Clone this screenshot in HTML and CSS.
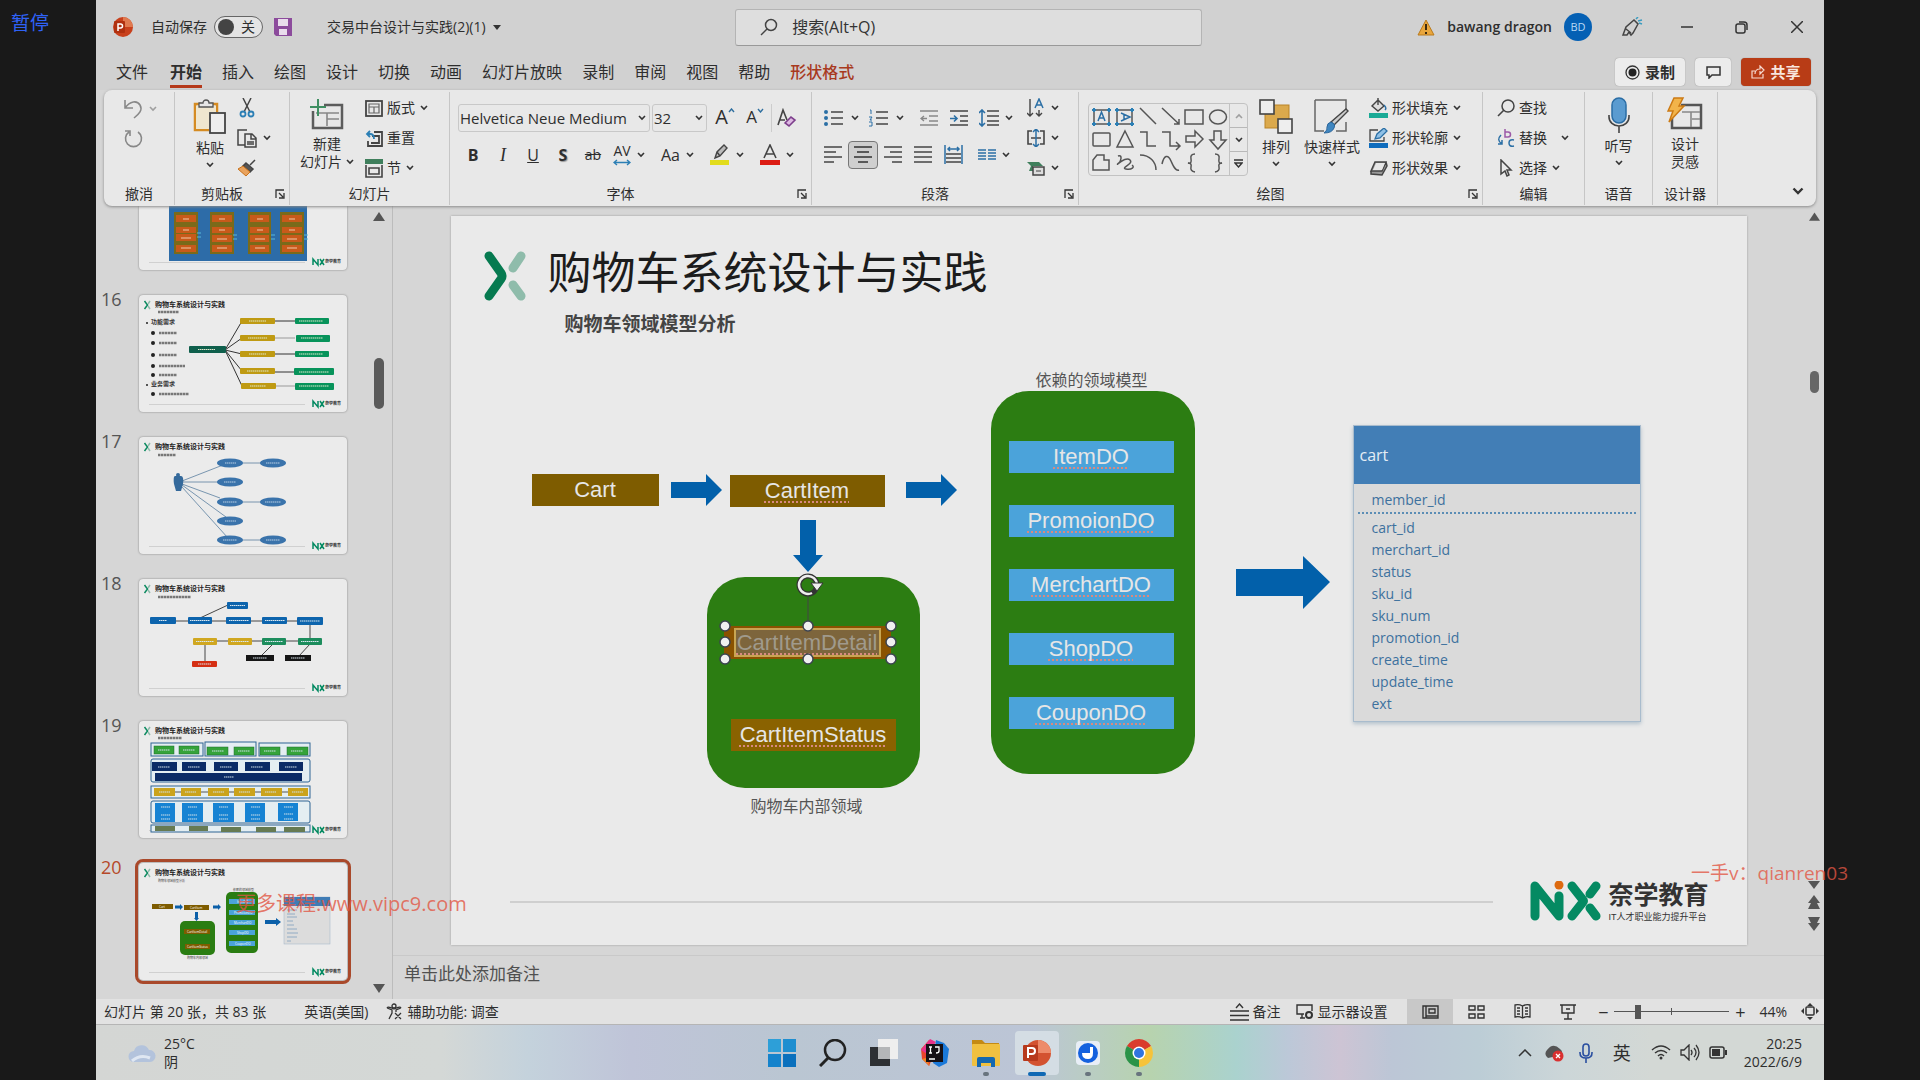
FILE: index.html
```html
<!DOCTYPE html>
<html lang="zh-CN">
<head>
    <meta charset="utf-8"/>
    <title>交易中台设计与实践(2)(1)</title>
    <link rel="stylesheet" href="styles.css">
</head>
<body>
<!-- 公用图形 -->
<svg class="defs" width="0" height="0">
    <symbol id="chev" viewBox="0 0 8 6"><path d="M1 1l3 3 3-3" fill="none" stroke="#333" stroke-width="1.6"/></symbol>
    <symbol id="launch" viewBox="0 0 10 10"><path d="M1 9V1h8M4 4l4 4M9 4v5H4" fill="none" stroke="#333" stroke-width="1.3"/></symbol>
    <symbol id="xmark" viewBox="0 0 42 50">
        <path d="M37 5L29 17M29 34l8 11" fill="none" stroke="#8fbcab" stroke-width="9" stroke-linecap="round"/>
        <path d="M5 5l12 17q2 3 0 6L5 45" fill="none" stroke="#067a50" stroke-width="9" stroke-linecap="round" stroke-linejoin="round"/>
    </symbol>
    <symbol id="nix" viewBox="0 0 71 40">
        <g fill="none" stroke="#048a62" stroke-width="9" stroke-linecap="round" stroke-linejoin="round">
            <path d="M5 35V5l24 30V15"/>
            <path d="M42 5l11 14q1 1 0 2L42 35M66 5l-6 8M60 27l6 8"/>
        </g>
        <circle cx="29" cy="4" r="4.500" fill="#dd6a10"/>
    </symbol>
    <symbol id="thumbBase" viewBox="0 0 208 117">
        <path d="M5.500 6l3 4-3 4" fill="none" stroke="#0c8a60" stroke-width="1.500"/>
        <path d="M11 6l-2 3M9 11l2 3" stroke="#8fbcab" stroke-width="1.500"/>
        <text x="16" y="12" font-size="7" font-weight="bold" fill="#222">购物车系统设计与实践</text>
        <path d="M10 109.500h156" stroke="#c4c4c4" stroke-width=".7"/>
        <path d="M174 112v-6l5 6v-6M181 106l2 3-2 3M185 106l-2 3 2 3" fill="none" stroke="#048a62" stroke-width="1.500"/>
        <text x="186" y="110" font-size="4" font-weight="bold" fill="#333">奈学教育</text>
    </symbol>
</svg>

<div class="window">
    <header class="titlebar">
        <div class="title-left">
            <svg width="20" height="20" viewBox="0 0 20 20"><circle cx="10" cy="10" r="10" fill="#c8401c"/><path d="M10 0a10 10 0 0 1 10 10h-10z" fill="#e07a50"/><rect x="1" y="4" width="11" height="12" rx="1" fill="#b0300f"/><path d="M5 14V7h2.500a2 2 0 0 1 0 4H5" fill="none" stroke="#fff" stroke-width="1.500"/></svg>
            <label class="autosave">自动保存 <input type="checkbox" class="switch-input"><span class="switch"><i></i>关</span></label>
            <button class="save" aria-label="保存"><svg width="20" height="20" viewBox="0 0 20 20"><path d="M1 1h18v18H3l-2-2z" fill="#8c4b9c"/><rect x="5" y="2" width="10" height="7" fill="#e9dcec"/><rect x="6" y="12" width="8" height="6" fill="#e9dcec"/></svg></button>
            <button class="doc-name">交易中台设计与实践(2)(1) <svg width="8" height="5" viewBox="0 0 8 5"><path d="M0 0h8L4 5z" fill="#333"/></svg></button>
        </div>
        <label class="search">
            <svg width="18" height="18" viewBox="0 0 18 18"><circle cx="11" cy="7" r="5.500" fill="none" stroke="#444" stroke-width="1.500"/><path d="M7 11l-6 6" stroke="#444" stroke-width="1.500"/></svg>
            <input type="text" placeholder="搜索(Alt+Q)" aria-label="搜索">
        </label>
        <div class="title-right">
            <svg width="18" height="17" viewBox="0 0 18 17"><path d="M9 1l8 15H1z" fill="#e9a63c" stroke="#b97a1c"/><path d="M9 5v6M9 13v2" stroke="#3b2a10" stroke-width="2"/></svg>
            <span class="user">bawang dragon</span>
            <span class="avatar">BD</span>
            <div class="win-btns">
                <button aria-label="画笔"><svg width="22" height="20" viewBox="0 0 22 20"><path d="M2 18l3-8L13 3l4 4-5 9-2 2-2-3-2 3zM5 12l5 4" fill="none" stroke="#444" stroke-width="1.500"/><path d="M15 2l2-2M17 4l4-1M18 6l3 1" stroke="#3a9cc0" stroke-width="1.500"/></svg></button>
                <button aria-label="最小化"><svg width="12" height="12" viewBox="0 0 12 12"><path d="M0 6h12" stroke="#333" stroke-width="1.500"/></svg></button>
                <button aria-label="还原"><svg width="13" height="13" viewBox="0 0 13 13"><rect x="1" y="3" width="9" height="9" rx="2" fill="none" stroke="#333" stroke-width="1.500"/><path d="M4 1h5q3 0 3 3v5" fill="none" stroke="#333" stroke-width="1.500"/></svg></button>
                <button aria-label="关闭"><svg width="12" height="12" viewBox="0 0 12 12"><path d="M0 0l12 12M12 0L0 12" stroke="#333" stroke-width="1.500"/></svg></button>
            </div>
        </div>
    </header>

    <nav class="tabs">
        <a href="#" class="file">文件</a>
        <a href="#" class="on">开始</a>
        <a href="#">插入</a>
        <a href="#">绘图</a>
        <a href="#">设计</a>
        <a href="#">切换</a>
        <a href="#">动画</a>
        <a href="#">幻灯片放映</a>
        <a href="#">录制</a>
        <a href="#">审阅</a>
        <a href="#">视图</a>
        <a href="#">帮助</a>
        <a href="#" class="format">形状格式</a>
        <div class="tab-btns">
            <button class="rec"><svg width="15" height="15" viewBox="0 0 15 15"><circle cx="7.500" cy="7.500" r="6.500" fill="none" stroke="#333" stroke-width="1.300"/><circle cx="7.500" cy="7.500" r="4" fill="#222"/></svg>录制</button>
            <button class="comment" aria-label="批注"><svg width="15" height="13" viewBox="0 0 15 13"><path d="M1 1h13v8H6l-3 3V9H1z" fill="none" stroke="#333" stroke-width="1.500"/></svg></button>
            <button class="share"><svg width="14" height="14" viewBox="0 0 14 14"><path d="M4 6H1v7h11V9M4 9c0-4 3-5 5-5V1l4 4-4 4V6" fill="none" stroke="#f6d9cf" stroke-width="1.200"/></svg>共享</button>
        </div>
    </nav>

    <section class="ribbon">
        <div class="group g-undo">
            <div class="body col">
                <button aria-label="撤消"><svg width="20" height="20" viewBox="0 0 20 20"><path d="M2 1v8h8M2 9c5-7 12-8 15-3s-1 9-6 13" fill="none" stroke="#888" stroke-width="1.600"/></svg><svg class="chev pale" width="8" height="6"><use href="#chev"/></svg></button>
                <button aria-label="重做"><svg width="20" height="20" viewBox="0 0 20 20"><path d="M2 2h5v5M6 3a8 8 0 1 0 9 0" fill="none" stroke="#888" stroke-width="1.600"/></svg></button>
            </div>
            <div class="foot"><span>撤消</span></div>
        </div>
        <div class="group g-clip">
            <div class="body">
                <button class="big"><svg width="34" height="36" viewBox="0 0 34 36"><path d="M8 5H2v26h14M18 5h6v8" fill="none" stroke="#d58b22" stroke-width="2.500"/><path d="M3 7h20v6h-7v17H3z" fill="#efe6cf"/><path d="M6 8V4h4c0-4 6-4 6 0h4v4z" fill="#e6e6e6" stroke="#555" stroke-width="1.300"/><rect x="17" y="14" width="15" height="20" fill="#eee" stroke="#444" stroke-width="1.800"/></svg>粘贴<svg width="8" height="6"><use href="#chev"/></svg></button>
                <div class="col3">
                    <button aria-label="剪切"><svg width="20" height="20" viewBox="0 0 20 20"><path d="M6 0l7 14M14 0L7 14" stroke="#444" stroke-width="1.500"/><circle cx="6" cy="16" r="2.500" fill="none" stroke="#2b7fb5" stroke-width="1.800"/><circle cx="14" cy="16" r="2.500" fill="none" stroke="#2b7fb5" stroke-width="1.800"/></svg></button>
                    <button aria-label="复制"><svg width="20" height="20" viewBox="0 0 20 20"><path d="M8 17H1V2h9M8 6h7l4 4v9H8zM14 6v5h5M10 14h7M10 16h7" fill="none" stroke="#444" stroke-width="1.500"/></svg><svg class="chev" width="8" height="6"><use href="#chev"/></svg></button>
                    <button aria-label="格式刷"><svg width="20" height="18" viewBox="0 0 20 18"><path d="M13 6l5-5M9 4l7 6-3 3-7-6z" fill="#555" stroke="#444" stroke-width="1.500"/><path d="M6 7l7 6-4 4-8-7z" fill="#e9a25c" stroke="#c8721c"/></svg></button>
                </div>
            </div>
            <div class="foot"><span>剪贴板</span><svg class="launch" width="10" height="10"><use href="#launch"/></svg></div>
        </div>
        <div class="group g-slides">
            <div class="body">
                <button class="big"><svg width="34" height="32" viewBox="0 0 34 32"><path d="M14 6h18v23H3V12" fill="none" stroke="#5c5c5c" stroke-width="2.500"/><path d="M6 14h23M17 14v13M17 20h12" fill="none" stroke="#888" stroke-width="1.600"/><path d="M8 0v17M0 8h16" stroke="#3f8f62" stroke-width="2"/></svg>新建<span class="line">幻灯片 <svg width="8" height="6"><use href="#chev"/></svg></span></button>
                <div class="col3 txt">
                    <button><svg width="18" height="17" viewBox="0 0 18 17"><rect x="1" y="1" width="16" height="15" fill="none" stroke="#444" stroke-width="1.800"/><path d="M4 4h10v9H4zM4 7h10M9 7v6" fill="none" stroke="#666" stroke-width="1.200"/></svg>版式<svg class="chev" width="8" height="6"><use href="#chev"/></svg></button>
                    <button><svg width="18" height="17" viewBox="0 0 18 17"><path d="M9 2h8v14H3v-5M7 6h7v7H6" fill="none" stroke="#444" stroke-width="1.800"/><path d="M5 1L2 4l3 3M2 4h3q4 0 4 5" fill="none" stroke="#2b7fb5" stroke-width="1.800"/></svg>重置</button>
                    <button><svg width="18" height="19" viewBox="0 0 18 19"><rect x="0" y="0" width="18" height="5" fill="#3f7f5c"/><path d="M1 6v12h16V6M4 9h10v6H4z" fill="none" stroke="#444" stroke-width="1.600"/></svg>节<svg class="chev" width="8" height="6"><use href="#chev"/></svg></button>
                </div>
            </div>
            <div class="foot"><span>幻灯片</span></div>
        </div>
        <div class="group g-font">
            <div class="body rows">
                <div class="row">
                    <span class="combo family"><select aria-label="字体"><option>Helvetica Neue Medium</option></select><svg width="8" height="6"><use href="#chev"/></svg></span>
                    <span class="combo size"><select aria-label="字号"><option>32</option></select><svg width="8" height="6"><use href="#chev"/></svg></span>
                    <button class="slot grow">A<svg width="7" height="5" viewBox="0 0 7 5"><path d="M1 4l2.500-3L6 4" fill="none" stroke="#2f6f9f" stroke-width="1.400"/></svg></button>
                    <button class="slot grow less">A<svg width="7" height="5" viewBox="0 0 7 5"><path d="M1 1l2.500 3L6 1" fill="none" stroke="#2f6f9f" stroke-width="1.400"/></svg></button>
                    <button class="slot clear" aria-label="清除格式"><svg width="20" height="20" viewBox="0 0 20 20"><path d="M1 17L6 2l4 10M3 12h5" fill="none" stroke="#444" stroke-width="1.600"/><path d="M8 15l6-6 4 3-6 6z" fill="#ddb9e2" stroke="#7d3f8c" stroke-width="1.600"/></svg></button>
                </div>
                <div class="row">
                    <button class="slot"><b>B</b></button>
                    <button class="slot"><em>I</em></button>
                    <button class="slot"><u>U</u></button>
                    <button class="slot shadow">S</button>
                    <button class="slot"><s>ab</s></button>
                    <button class="drop av"><span>AV<svg width="18" height="7" viewBox="0 0 18 7"><path d="M1 3.500h16M4 1L1 3.500 4 6M14 1l3 2.500L14 6" fill="none" stroke="#2b7fb5" stroke-width="1.400"/></svg></span><svg class="chev" width="8" height="6"><use href="#chev"/></svg></button>
                    <button class="drop">Aa<svg class="chev" width="8" height="6"><use href="#chev"/></svg></button>
                    <button class="drop" aria-label="突出显示"><svg width="20" height="22" viewBox="0 0 20 22"><path d="M5 14l2-6 7-7 3 3-7 8-5 2zM7 8l3 4" fill="#bbb" stroke="#444" stroke-width="1.400"/><rect y="16" width="19" height="5" fill="#e2dc1c"/></svg><svg class="chev" width="8" height="6"><use href="#chev"/></svg></button>
                    <button class="drop" aria-label="字体颜色"><svg width="20" height="22" viewBox="0 0 20 22"><path d="M4 14L10 1l6 13M6 10h8" fill="none" stroke="#444" stroke-width="1.600"/><rect y="16" width="20" height="5" fill="#dc1c14"/></svg><svg class="chev" width="8" height="6"><use href="#chev"/></svg></button>
                </div>
            </div>
            <div class="foot"><span>字体</span><svg class="launch" width="10" height="10"><use href="#launch"/></svg></div>
        </div>
        <div class="group g-para">
            <div class="body">
                <div class="rows">
                    <div class="row">
                        <button class="drop" aria-label="项目符号"><svg width="19" height="18" viewBox="0 0 19 18"><path d="M7 3h12M7 9h12M7 15h12" stroke="#444" stroke-width="1.600"/><g fill="#2b6fa5"><circle cx="2" cy="3" r="2"/><circle cx="2" cy="9" r="2"/><circle cx="2" cy="15" r="2"/></g></svg><svg class="chev far" width="8" height="6"><use href="#chev"/></svg></button>
                        <button class="drop" aria-label="编号"><svg width="19" height="18" viewBox="0 0 19 18"><path d="M7 3h12M7 9h12M7 15h12" stroke="#444" stroke-width="1.600"/><path d="M1 1h1v4M0 8h3l-2 3h2M0 13h3v4H0" fill="none" stroke="#2b6fa5"/></svg><svg class="chev far" width="8" height="6"><use href="#chev"/></svg></button>
                        <button class="slot" aria-label="减少缩进"><svg width="18" height="18" viewBox="0 0 18 18"><path d="M0 2h18M9 7h9M9 12h9M0 16h18M7 9.500H1M4 7L1 9.500 4 12" fill="none" stroke="#888" stroke-width="1.300"/></svg></button>
                        <button class="slot" aria-label="增加缩进"><svg width="18" height="18" viewBox="0 0 18 18"><path d="M0 2h18M10 7h8M10 12h8M0 16h18" stroke="#444" stroke-width="1.500"/><path d="M0 9.500h7M4 6.500l3 3-3 3" fill="none" stroke="#2b6fa5" stroke-width="1.600"/></svg></button>
                        <button class="drop spacing" aria-label="行距"><svg width="20" height="18" viewBox="0 0 20 18"><path d="M8 2h12M8 7h12M8 12h12M8 16h12" stroke="#444" stroke-width="1.500"/><path d="M3 1v16M0 4l3-3 3 3M0 14l3 3 3-3" fill="none" stroke="#2b6fa5" stroke-width="1.600"/></svg><svg class="chev" width="8" height="6"><use href="#chev"/></svg></button>
                    </div>
                    <div class="row aligns">
                        <button class="slot" aria-label="左对齐"><svg width="18" height="17" viewBox="0 0 18 17"><path d="M0 1h18M0 6h12M0 11h18M0 16h10" stroke="#444" stroke-width="1.600"/></svg></button>
                        <button class="slot on" aria-label="居中"><svg width="18" height="17" viewBox="0 0 18 17"><path d="M0 1h18M3 6h12M0 11h18M4 16h10" stroke="#333" stroke-width="1.600"/></svg></button>
                        <button class="slot" aria-label="右对齐"><svg width="18" height="17" viewBox="0 0 18 17"><path d="M0 1h18M6 6h12M0 11h18M8 16h10" stroke="#444" stroke-width="1.600"/></svg></button>
                        <button class="slot" aria-label="两端对齐"><svg width="18" height="17" viewBox="0 0 18 17"><path d="M0 1h18M0 6h18M0 11h18M0 16h18" stroke="#444" stroke-width="1.600"/></svg></button>
                        <button class="slot" aria-label="分散对齐"><svg width="19" height="19" viewBox="0 0 19 19"><path d="M1 0v19M18 0v19M4 4h11M6 2L4 4l2 2M13 2l2 2-2 2" fill="none" stroke="#2b6fa5" stroke-width="1.500"/><path d="M2 9h15M2 13h15M2 17h15" stroke="#444" stroke-width="1.400"/></svg></button>
                        <button class="drop" aria-label="分栏"><svg width="18" height="12" viewBox="0 0 18 12"><path d="M0 1h8M0 4h8M0 7h8M0 10h8M10 1h8M10 4h8M10 7h8M10 10h8" stroke="#2b6fa5" stroke-width="1.500"/></svg><svg class="chev" width="8" height="6"><use href="#chev"/></svg></button>
                    </div>
                </div>
                <div class="col3">
                    <button aria-label="文字方向"><svg width="18" height="20" viewBox="0 0 18 20"><path d="M3 1v17M0 15l3 3 3-3M12 12v6M9 15l3 3 3-3" fill="none" stroke="#444" stroke-width="1.400"/><path d="M8 10l4-9 4 9M9 7h6" fill="none" stroke="#2b6fa5" stroke-width="1.500"/></svg><svg class="chev" width="8" height="6"><use href="#chev"/></svg></button>
                    <button aria-label="对齐文本"><svg width="18" height="18" viewBox="0 0 18 18"><path d="M5 2H1v13h4M13 2h4v13h-4M4 9h10" fill="none" stroke="#444" stroke-width="1.600"/><path d="M9 0v18M6 3l3-3 3 3M6 15l3 3 3-3" fill="none" stroke="#2b6fa5" stroke-width="1.500"/></svg><svg class="chev" width="8" height="6"><use href="#chev"/></svg></button>
                    <button aria-label="转换为SmartArt"><svg width="18" height="15" viewBox="0 0 18 15"><path d="M0 1h12l4 4H6v5H2l2-5z" fill="#3f7f5c"/><rect x="6" y="6" width="11" height="8" fill="#ddd" stroke="#444" stroke-width="1.500"/><path d="M9 10h5" stroke="#444"/></svg><svg class="chev" width="8" height="6"><use href="#chev"/></svg></button>
                </div>
            </div>
            <div class="foot"><span>段落</span><svg class="launch" width="10" height="10"><use href="#launch"/></svg></div>
        </div>
        <div class="group g-draw">
            <div class="body">
                <div class="shapes">
                    <svg width="140" height="72" viewBox="0 0 140 72" fill="none" stroke="#555" stroke-width="1.500">
                        <g stroke="#2b6fa5"><path d="M5 6h15v14H5zM28 6h15v14H28z" stroke="#555"/><path d="M9 17l3.500-9L16 17M10 14h5M32 9l9 4-9 4M35 10v5"/></g>
                        <path d="M5 4v4M3 6h4M20 4v4M18 6h4M5 18v4M3 20h4M20 18v4M18 20h4M28 4v4M26 6h4M43 4v4M41 6h4M28 18v4M26 20h4M43 18v4M41 20h4" stroke="#2b7fb5" stroke-width="2"/>
                        <path d="M51 4l16 16M73 4l17 16M90 15v5h-5"/><rect x="96" y="6" width="18" height="14"/><ellipse cx="129" cy="13" rx="8.500" ry="7"/>
                        <rect x="4" y="29" width="17" height="13" rx="1"/><path d="M36 27l8 16H28zM51 28h7v14h9M73 28h8v14h9M87 38l4 4-4 4M97 32h9v-5l8 8-8 8v-5h-9zM125 27h7v9h5l-8 9-8-9h4z"/>
                        <path d="M4 66V56l4-5h7v5h5v10zM29 52c5-2 3 6 0 8s8-8 12-4-10 8-4 9 9-2 6-4M51 51c10 0 16 7 16 15M73 60c2-9 6-10 9-3s5 10 8 9M106 50q-5 0-4 5t-3 4q4 0 3 4t4 5M126 50q5 0 4 5t3 4q-4 0-3 4t-4 5"/>
                    </svg>
                    <div class="shape-scroll">
                        <button aria-label="上"><svg class="up pale" width="8" height="6"><use href="#chev"/></svg></button>
                        <button aria-label="下"><svg width="8" height="6"><use href="#chev"/></svg></button>
                        <button aria-label="更多"><svg width="9" height="9" viewBox="0 0 9 9"><path d="M0 1h9" stroke="#333" stroke-width="1.500"/><path d="M1 4h7L4.500 8z" fill="none" stroke="#333" stroke-width="1.400"/></svg></button>
                    </div>
                </div>
                <button class="big"><svg width="34" height="35" viewBox="0 0 34 35"><rect x="6" y="6" width="24" height="23" fill="#dba94c" stroke="#b98326"/><rect x="1" y="1" width="14" height="14" fill="#eee" stroke="#444" stroke-width="1.600"/><rect x="19" y="20" width="14" height="14" fill="#eee" stroke="#444" stroke-width="1.600"/></svg>排列<svg width="8" height="6"><use href="#chev"/></svg></button>
                <button class="big"><svg width="36" height="35" viewBox="0 0 36 35"><path d="M1 1h31v10M1 1v31h9M22 32h10V23" fill="none" stroke="#666" stroke-width="1.500"/><path d="M34 12L20 26l-3-3L32 10z" fill="#ccc" stroke="#444" stroke-width="1.400"/><path d="M17 23q5 2 3 6-2 5-10 5 4-3 3-6 0-4 4-5z" fill="#3f86c0" stroke="#2a659a"/></svg>快速样式<svg width="8" height="6"><use href="#chev"/></svg></button>
                <div class="col3 txt">
                    <button><svg width="19" height="20" viewBox="0 0 19 20"><path d="M9 2l6 6-6 5-6-5zM9 0v7" fill="#ddd" stroke="#444" stroke-width="1.400"/><path d="M15 7q3 3 1 5" stroke="#2b6fa5" fill="none" stroke-width="1.500"/><rect y="15" width="19" height="5" fill="#1aaa96"/></svg>形状填充<svg class="chev" width="8" height="6"><use href="#chev"/></svg></button>
                    <button><svg width="19" height="20" viewBox="0 0 19 20"><path d="M9 2H1v11h14V9" fill="none" stroke="#444" stroke-width="1.300"/><path d="M6 11l2-5 7-6 3 3-7 7z" fill="#8fc0e6" stroke="#2b6fa5" stroke-width="1.300"/><rect y="15" width="19" height="5" fill="#0f6cbd"/></svg>形状轮廓<svg class="chev" width="8" height="6"><use href="#chev"/></svg></button>
                    <button><svg width="19" height="16" viewBox="0 0 19 16"><path d="M6 2h11l-4 9H2zM2 11v3l11 1 5-9-1-4" fill="#999" stroke="#444" stroke-width="1.500"/><path d="M7 3h9l-3 7H4z" fill="#e6e6e6"/></svg>形状效果<svg class="chev" width="8" height="6"><use href="#chev"/></svg></button>
                </div>
            </div>
            <div class="foot"><span>绘图</span><svg class="launch" width="10" height="10"><use href="#launch"/></svg></div>
        </div>
        <div class="group g-edit">
            <div class="body">
                <div class="col3 txt">
                    <button><svg width="18" height="18" viewBox="0 0 18 18"><circle cx="11" cy="7" r="6" fill="none" stroke="#444" stroke-width="1.500"/><path d="M7 11l-6 6" stroke="#444" stroke-width="1.600"/></svg>查找</button>
                    <button><svg width="18" height="20" viewBox="0 0 18 20"><path d="M8 1v8h3a2 2 0 0 0 0-5H8" fill="none" stroke="#9c5aa8" stroke-width="1.500"/><path d="M17 12q-5-1-5 3t5 3M4 7q-5 5 1 9M5 12v4H1" fill="none" stroke="#2b6fa5" stroke-width="1.500"/></svg>替换<svg class="chev wide" width="8" height="6"><use href="#chev"/></svg></button>
                    <button><svg width="18" height="18" viewBox="0 0 18 18"><path d="M4 1v14l4-3 2 5 2-1-2-5h4z" fill="none" stroke="#444" stroke-width="1.500"/></svg>选择<svg class="chev" width="8" height="6"><use href="#chev"/></svg></button>
                </div>
            </div>
            <div class="foot"><span>编辑</span></div>
        </div>
        <div class="group g-voice">
            <div class="body">
                <button class="big"><svg width="22" height="36" viewBox="0 0 22 36"><rect x="4" y="1" width="14" height="25" rx="7" fill="#5a9bd0" stroke="#2a6da5" stroke-width="1.500"/><path d="M1 18v2a10 9 0 0 0 20 0v-2M11 29v7" fill="none" stroke="#444" stroke-width="1.600"/></svg>听写<svg width="8" height="6"><use href="#chev"/></svg></button>
            </div>
            <div class="foot"><span>语音</span></div>
        </div>
        <div class="group g-idea">
            <div class="body">
                <button class="big"><svg width="36" height="34" viewBox="0 0 36 34"><path d="M14 8h20v23H5V21" fill="none" stroke="#555" stroke-width="2.500"/><path d="M15 15h18M24 15v15M25 22h8" stroke="#888" stroke-width="1.600"/><path d="M7 1h9l-4 8h5L2 25l4-11H1z" fill="#f2b44a" stroke="#cc7a14" stroke-width="1.500"/></svg>设计<span class="line">灵感</span></button>
            </div>
            <div class="foot"><span>设计器</span></div>
        </div>
        <button class="collapse" aria-label="折叠功能区"><svg width="12" height="9"><use href="#chev"/></svg></button>
    </section>

    <main class="work">
        <aside class="thumbs">
            <ol>
                <li><span>15</span>
                    <svg viewBox="0 0 208 117"><use href="#thumbBase"/>
                        <rect x="30" y="40" width="138" height="68" fill="#2d6ca8"/>
                        <g fill="#7a6a1a"><rect x="35" y="59" width="24" height="42"/><rect x="71" y="59" width="24" height="42"/><rect x="109" y="59" width="23" height="42"/><rect x="141" y="59" width="24" height="42"/></g>
                        <g fill="#c85a1a"><path d="M37 62h20v7H37zM37 74h20v6H37zM37 81h20v7H37zM37 92h20v7H37zM73 62h20v7H73zM73 74h20v6H73zM73 82h20v7H73zM73 92h20v7H73zM111 62h19v7h-19zM111 74h19v6h-19zM111 82h19v7h-19zM111 92h19v7h-19zM143 62h20v7h-20zM143 74h20v6h-20zM143 82h20v7h-20zM143 92h20v7h-20z"/></g>
                        <path d="M44 66h6M44 77h6M42 85h10M42 95h10M80 66h6M80 77h6M78 86h10M78 95h10M118 66h6M118 77h6M116 86h10M116 95h10M150 66h6M150 77h6M148 86h10M148 95h10" stroke="#f0c8a8"/>
                        <path d="M58 80h4M58 84h4M94 82h4M94 86h4M132 82h4M132 86h4M165 82h4M165 86h4" stroke="#59b8d8"/>
                    </svg></li>
                <li><span>16</span>
                    <svg viewBox="0 0 208 117"><use href="#thumbBase"/>
                        <path d="M19 17h21" stroke="#777" stroke-width="2.500" stroke-dasharray="2.500 .5"/>
                        <text x="12" y="29" font-size="6" font-weight="bold" fill="#333">功能需求</text><text x="12" y="91" font-size="6" font-weight="bold" fill="#333">业务需求</text>
                        <g fill="#222"><circle cx="8" cy="28" r="1"/><circle cx="8" cy="90" r="1"/><circle cx="14" cy="38" r="2"/><circle cx="14" cy="48" r="2"/><circle cx="14" cy="60" r="2"/><circle cx="14" cy="71" r="2"/><circle cx="14" cy="80" r="2"/><circle cx="14" cy="99" r="2"/></g>
                        <path d="M20 38h18M20 48h18M20 60h18M20 71h26M20 80h18M20 99h30" stroke="#777" stroke-width="2.500" stroke-dasharray="2.500 .5"/>
                        <path d="M86 55l17-29M86 55l17-12M86 55l17 4M86 55l17 21M86 55l17 36" fill="none" stroke="#333"/>
                        <path d="M136 26h20M136 59h20M136 77h20" stroke="#333"/><path d="M136 43h20M136 91h20" stroke="#999"/>
                        <rect x="50" y="51" width="37" height="7" rx="1" fill="#0f5f4c"/>
                        <g fill="#bf9a12"><rect x="101" y="23" width="35" height="6" rx="1"/><rect x="101" y="40" width="35" height="6" rx="1"/><rect x="101" y="56" width="35" height="6" rx="1"/><rect x="101" y="73" width="35" height="6" rx="1"/><rect x="102" y="88" width="35" height="6" rx="1"/></g>
                        <g fill="#07935a"><rect x="156" y="23" width="34" height="6" rx="1"/><rect x="157" y="40" width="34" height="7" rx="1"/><rect x="156" y="56" width="34" height="6" rx="1"/><rect x="155" y="73" width="40" height="7" rx="1"/><rect x="156" y="88" width="39" height="7" rx="1"/></g>
                        <path d="M59 54.500h17M110 26h17M109 43h19M110 59h17M108 76h22M111 91h16M160 26h24M162 43h22M160 59h24M160 77h30M160 91h30" stroke="#dfe8cc" stroke-dasharray="1.500 .5"/>
                    </svg></li>
                <li><span>17</span>
                    <svg viewBox="0 0 208 117"><use href="#thumbBase"/>
                        <path d="M19 18h18" stroke="#777" stroke-width="2.500" stroke-dasharray="2.500 .5"/>
                        <path d="M43 44l41-16M43 45h36M43 47l38 14M43 48l44 32M43 50l46 51M104 26h18M104 65h18M104 103h18" fill="none" stroke="#5b7fa0" stroke-width=".8"/>
                        <path d="M36 39q-2 0-1 8l2 7h5l2-7q1-8-2-8z" fill="#34699b"/><circle cx="39" cy="38" r="2" fill="#34699b"/>
                        <g fill="#3a73ab"><ellipse cx="91" cy="26" rx="13" ry="4.500"/><ellipse cx="134" cy="26" rx="13" ry="4.500"/><ellipse cx="91" cy="45" rx="13" ry="4.500"/><ellipse cx="91" cy="65" rx="13" ry="4.500"/><ellipse cx="134" cy="65" rx="13" ry="4.500"/><ellipse cx="91" cy="84" rx="13" ry="4.500"/><ellipse cx="91" cy="103" rx="13" ry="4.500"/><ellipse cx="134" cy="103" rx="13" ry="4.500"/></g>
                        <path d="M86 26h11M127 26h14M85 45h12M84 65h14M126 65h16M86 84h11M84 103h14M127 103h14" stroke="#b8cfe4" stroke-dasharray="1.500 .5"/>
                    </svg></li>
                <li><span>18</span>
                    <svg viewBox="0 0 208 117"><use href="#thumbBase"/>
                        <path d="M19 18h33" stroke="#777" stroke-width="2.500" stroke-dasharray="2.500 .5"/>
                        <path d="M37 42h122M61 39l28-13M171 45v14M165 62H70M66 65v17M134 65l-12 12M171 65l-11 12" fill="none" stroke="#333" stroke-width=".9"/>
                        <g fill="#0d64ad"><rect x="11" y="38" width="26" height="7" rx="1"/><rect x="49" y="38" width="24" height="7" rx="1"/><rect x="87" y="38" width="25" height="7" rx="1"/><rect x="123" y="38" width="25" height="7" rx="1"/><rect x="158" y="38" width="26" height="8" rx="1"/><rect x="88" y="23" width="21" height="7" rx="1"/></g>
                        <g fill="#d0a720"><rect x="54" y="59" width="24" height="7" rx="1"/><rect x="89" y="59" width="24" height="7" rx="1"/></g>
                        <g fill="#1d8d5d"><rect x="123" y="59" width="24" height="7" rx="1"/><rect x="159" y="59" width="24" height="7" rx="1"/></g>
                        <rect x="107" y="76" width="28" height="6" fill="#151515"/><rect x="146" y="76" width="26" height="6" fill="#151515"/><rect x="53" y="82" width="25" height="6" rx="1" fill="#d52f13"/>
                        <path d="M20 41.500h8M51 41.500h20M90 41.500h20M126 41.500h20M161 42h20M91 26.500h15M57 62.500h18M92 62.500h18M126 62.500h18M162 62.500h18M114 79h14M152 79h14M59 85h13" stroke="#d9e6ee" stroke-dasharray="1.500 .5"/>
                    </svg></li>
                <li><span>19</span>
                    <svg viewBox="0 0 208 117"><use href="#thumbBase"/>
                        <path d="M19 17h24" stroke="#777" stroke-width="2.500" stroke-dasharray="2.500 .5"/>
                        <g fill="#e4eef2" stroke="#2f6594"><rect x="12" y="22" width="52" height="13"/><rect x="66" y="21" width="51" height="14"/><rect x="120" y="22" width="51" height="13"/><rect x="12" y="38" width="159" height="23" rx="2"/><rect x="12" y="65" width="159" height="12"/><rect x="12" y="80" width="159" height="22" rx="2"/><rect x="12" y="104" width="159" height="7"/></g>
                        <g fill="#35a33a" stroke="#1d6e2e" stroke-width=".5"><rect x="15" y="25" width="20" height="8"/><rect x="40" y="25" width="20" height="8"/><rect x="68" y="26" width="21" height="8"/><rect x="95" y="26" width="20" height="8"/><rect x="121" y="26" width="20" height="8"/><rect x="148" y="26" width="21" height="8"/></g>
                        <g fill="#0b2b66"><rect x="13" y="41" width="25" height="9"/><rect x="43" y="41" width="24" height="9"/><rect x="75" y="41" width="24" height="9"/><rect x="106" y="41" width="25" height="9"/><rect x="140" y="41" width="24" height="9"/><rect x="16" y="52" width="147" height="8"/></g>
                        <path d="M20 71h145" stroke="#555"/>
                        <g fill="#cba31b"><rect x="15" y="67" width="21" height="8"/><rect x="42" y="67" width="20" height="8"/><rect x="69" y="67" width="21" height="8"/><rect x="95" y="67" width="21" height="8"/><rect x="122" y="67" width="21" height="8"/><rect x="149" y="67" width="20" height="8"/></g>
                        <g fill="#1683d3"><rect x="16" y="82" width="20" height="19"/><rect x="43" y="82" width="21" height="19"/><rect x="74" y="82" width="21" height="19"/><rect x="106" y="82" width="20" height="19"/><rect x="139" y="82" width="20" height="18"/></g>
                        <g fill="#667a52"><rect x="16" y="105" width="20" height="5"/><rect x="50" y="105" width="19" height="5"/><rect x="82" y="106" width="20" height="5"/><rect x="117" y="106" width="20" height="5"/><rect x="145" y="106" width="21" height="5"/></g>
                        <path d="M19 29h12M44 29h12M73 30h12M99 30h12M125 30h12M152 30h12M19 46h12M49 46h12M81 46h12M112 46h12M146 46h12M85 56h10M20 71h11M46 71h11M74 71h11M100 71h11M126 71h11M153 71h11M22 86h9M22 94h9M22 98h9M49 86h9M49 94h9M49 98h9M80 86h9M80 94h9M80 98h9M112 86h9M112 94h9M112 98h9M145 86h9M145 93h9M145 98h9" stroke="#cfe0e8" stroke-dasharray="1.500 .5"/>
                    </svg></li>
                <li class="cur"><span>20</span>
                    <svg viewBox="0 0 208 117"><use href="#thumbBase"/>
                        <text x="19" y="19" font-size="3" fill="#444">购物车领域模型分析</text>
                        <text x="94" y="28" font-size="3" fill="#444">依赖的领域模型</text><text x="48" y="96" font-size="3" fill="#444">购物车内部领域</text>
                        <g fill="#2a7d12"><rect x="87" y="29" width="32" height="61" rx="5"/><rect x="41" y="58" width="35" height="34" rx="5"/></g>
                        <g fill="#7e5c00"><rect x="13" y="41" width="21" height="5"/><rect x="45" y="42" width="25" height="5"/><rect x="45" y="66" width="26" height="5"/><rect x="46" y="81" width="25" height="5"/></g>
                        <g fill="#4ba3da"><rect x="90" y="36" width="26" height="5"/><rect x="90" y="47" width="26" height="5"/><rect x="90" y="57" width="26" height="5"/><rect x="90" y="67" width="26" height="5"/><rect x="90" y="78" width="26" height="5"/></g>
                        <g fill="#0b5fa8"><path d="M36 42.500h5V41l3 3-3 3v-1.500h-5zM74 42.500h5V41l3 3-3 3v-1.500h-5zM56 49h3v6h1l-2.500 3-2.500-3h1zM126 57h11v-2l5 4-5 4v-2h-11z"/></g>
                        <rect x="145" y="34" width="46" height="47" fill="#dcdcdc" stroke="#9fb4c8" stroke-width=".5"/><rect x="145" y="34" width="46" height="9" fill="#3f7cb5"/>
                        <g font-size="3" fill="#fff"><text x="20" y="45">Cart</text><text x="51" y="45.500">CartItem</text><text x="48" y="69.500">CartItemDetail</text><text x="48" y="84.500">CartItemStatus</text><text x="98" y="39.500">ItemDO</text><text x="95" y="50.500">PromoionDO</text><text x="95" y="60.500">MerchartDO</text><text x="98" y="70.500">ShopDO</text><text x="96" y="81.500">CouponDO</text></g>
                        <path d="M148 47h10M148 51h8M148 54h10M148 58h6M148 62h7M148 66h10M148 70h11M148 74h10M148 78h4" stroke="#7e9fbe" stroke-width=".8"/>
                    </svg></li>
            </ol>
            <div class="scroll">
                <svg width="12" height="9" viewBox="0 0 12 9"><path d="M6 0l6 9H0z" fill="#555"/></svg>
                <i class="bar"></i>
                <svg width="12" height="9" viewBox="0 0 12 9"><path d="M0 0h12L6 9z" fill="#555"/></svg>
            </div>
        </aside>
        <div class="editor">
            <div class="stage">
                <article class="slide">
                    <svg class="xmark" width="42" height="50"><use href="#xmark"/></svg>
                    <h1>购物车系统设计与实践</h1>
                    <h2>购物车领域模型分析</h2>
                    <svg class="arrows" viewBox="0 0 1296 729" fill="#0260aa">
                        <path d="M220 266h35v-8l16 16-16 16v-8h-35z"/>
                        <path d="M455 266h35v-8l16 16-16 16v-8h-35z"/>
                        <path d="M349 304h16v35h7l-15 17-15-17h7z"/>
                        <path d="M785 353h67v-13l27 26-27 27v-13h-67z"/>
                        <path d="M59 686h983" stroke="#b4b4b4"/>
                    </svg>
                    <div class="node gold n-cart">Cart</div>
                    <div class="node gold n-item"><u>CartItem</u></div>
                    <div class="area inner"></div>
                    <div class="area depend"></div>
                    <p class="cap cap-inner">购物车内部领域</p>
                    <p class="cap cap-depend">依赖的领域模型</p>
                    <div class="node gold n-detail"><u>CartItemDetail</u></div>
                    <svg class="handles" width="182" height="98" viewBox="0 0 182 98">
                        <path d="M91 26v28" stroke="#444"/>
                        <circle cx="91" cy="15" r="9" fill="none" stroke="#333" stroke-width="5"/>
                        <path d="M95 23a9 9 0 1 1 5-8" fill="none" stroke="#eee" stroke-width="2.500"/><path d="M94 13h12l-6 8z" fill="#eee" stroke="#333"/>
                        <g fill="#f0f0f0" stroke="#3c4350" stroke-width="1.500"><circle cx="8" cy="56" r="5"/><circle cx="91" cy="56" r="5"/><circle cx="174" cy="56" r="5"/><circle cx="8" cy="72" r="5"/><circle cx="174" cy="72" r="5"/><circle cx="8" cy="89" r="5"/><circle cx="91" cy="89" r="5"/><circle cx="174" cy="89" r="5"/></g>
                    </svg>
                    <div class="node gold n-status"><u>CartItemStatus</u></div>
                    <div class="depend-list">
                        <div class="node blue"><u>ItemDO</u></div>
                        <div class="node blue"><u>PromoionDO</u></div>
                        <div class="node blue"><u>MerchartDO</u></div>
                        <div class="node blue"><u>ShopDO</u></div>
                        <div class="node blue"><u>CouponDO</u></div>
                    </div>
                    <div class="entity">
                        <h3>cart</h3>
                        <p>member_id</p>
                        <ul>
                            <li>cart_id</li>
                            <li>merchart_id</li>
                            <li>status</li>
                            <li>sku_id</li>
                            <li>sku_num</li>
                            <li>promotion_id</li>
                            <li>create_time</li>
                            <li>update_time</li>
                            <li>ext</li>
                        </ul>
                    </div>
                    <div class="brand">
                        <svg width="71" height="40"><use href="#nix"/></svg>
                        <div><strong>奈学教育</strong><small>IT人才职业能力提升平台</small></div>
                    </div>
                </article>
                <div class="scroll main-scroll">
                    <svg width="11" height="9" viewBox="0 0 12 9"><path d="M6 0l6 9H0z" fill="#555"/></svg>
                    <i class="bar"></i>
                    <div class="pager">
                        <svg width="12" height="8" viewBox="0 0 12 8"><path d="M0 0h12L6 8z" fill="#555"/></svg>
                        <svg width="12" height="15" viewBox="0 0 12 15"><path d="M6 0l6 8H9l3 6H0l3-6H0z" fill="#555"/></svg>
                        <svg width="12" height="15" viewBox="0 0 12 15"><path d="M0 1h12L9 7h3l-6 8-6-8h3z" fill="#555"/></svg>
                    </div>
                </div>
            </div>
            <div class="notes">单击此处添加备注</div>
        </div>
    </main>

    <footer class="status">
        <span>幻灯片 第 20 张，共 83 张</span>
        <span class="lang">英语(美国)</span>
        <button class="a11y"><svg width="17" height="17" viewBox="0 0 17 17"><circle cx="8" cy="3" r="2" fill="none" stroke="#333" stroke-width="1.300"/><path d="M1 5l5 2v3l-3 6M15 5l-5 2v2M1 5q1-2 7 1 6-3 7-1M9 10l6 6M15 10l-6 6" fill="none" stroke="#333" stroke-width="1.300"/></svg>辅助功能: 调查</button>
        <div class="status-right">
            <button class="note-btn"><svg width="19" height="18" viewBox="0 0 19 18"><path d="M6 5l3.500-4L13 5M0 8h19M0 12.500h19M0 17h19" fill="none" stroke="#333" stroke-width="1.400"/></svg>备注</button>
            <button class="disp-btn"><svg width="18" height="16" viewBox="0 0 18 16"><path d="M8 10H1V1h15v6M4 14h5M6 10v4" fill="none" stroke="#333" stroke-width="1.400"/><circle cx="13" cy="11" r="3" fill="none" stroke="#333" stroke-width="2"/></svg>显示器设置</button>
            <div class="views">
                <button class="on" aria-label="普通"><svg width="17" height="14" viewBox="0 0 17 14"><path d="M1 1h15v12H1zM4 1v12M7 4h6v4H7zM4 11h12" fill="none" stroke="#333" stroke-width="1.400"/></svg></button>
                <button aria-label="浏览"><svg width="17" height="14" viewBox="0 0 17 14"><path d="M1 1h6v4H1zM10 1h6v4h-6zM1 9h6v4H1zM10 9h6v4h-6z" fill="none" stroke="#333" stroke-width="1.400"/></svg></button>
                <button aria-label="阅读视图"><svg width="17" height="15" viewBox="0 0 17 15"><path d="M8.500 2Q5 0 1 1v12q4-1 7.500 1 3.500-2 7.500-1V1q-4-1-7.500 1zv12M3 4h3M3 7h3M3 10h3M11 4h3M11 7h3M11 10h3" fill="none" stroke="#333" stroke-width="1.300"/></svg></button>
                <button aria-label="放映"><svg width="16" height="16" viewBox="0 0 16 16"><path d="M0 1h16M2 1v8h12V1M8 9v6M4 15h8M6 5h4" fill="none" stroke="#333" stroke-width="1.400"/></svg></button>
            </div>
            <button class="zoom-btn" aria-label="缩小">−</button>
            <input type="range" min="10" max="210" value="48" aria-label="缩放">
            <button class="zoom-btn" aria-label="放大">+</button>
            <span class="pct">44%</span>
            <button class="fit" aria-label="适应窗口"><svg width="18" height="17" viewBox="0 0 18 17"><rect x="5" y="4" width="8" height="8" rx="1" fill="none" stroke="#333" stroke-width="1.500"/><path d="M6 3l3-3 3 3zM6 14l3 3 3-3zM3 5L0 8l3 3zM15 5l3 3-3 3z" fill="#333"/></svg></button>
        </div>
    </footer>

    <div class="taskbar">
        <div class="weather">
            <svg width="28" height="18" viewBox="0 0 28 18"><path d="M6 18a5.500 5.500 0 0 1 0-11 8 8 0 0 1 15-1 6 6 0 0 1 1 12z" fill="#b3c3dc"/><path d="M4 17q8-7 18-3" fill="none" stroke="#dfe7f2" stroke-width="3"/></svg>
            <div><span>25°C</span><span>阴</span></div>
        </div>
        <div class="apps">
            <button aria-label="开始"><svg width="28" height="28" viewBox="0 0 28 28"><path d="M0 0h13v13H0z" fill="#2d9fd8"/><path d="M15 0h13v13H15z" fill="#1e8ed0"/><path d="M0 15h13v13H0z" fill="#1583cc"/><path d="M15 15h13v13H15z" fill="#0a70bd"/></svg></button>
            <button aria-label="搜索"><svg width="28" height="28" viewBox="0 0 28 28"><circle cx="16" cy="11" r="10" fill="none" stroke="#222" stroke-width="2.500"/><path d="M9 19l-8 8" stroke="#222" stroke-width="3"/></svg></button>
            <button aria-label="任务视图"><svg width="28" height="28" viewBox="0 0 28 28"><rect x="8" y="0" width="20" height="20" fill="#eee"/><rect x="0" y="8" width="20" height="19" fill="#2d3034"/><rect x="8" y="8" width="12" height="12" fill="#b4b6b8"/></svg></button>
            <button aria-label="IntelliJ IDEA"><svg width="28" height="28" viewBox="0 0 28 28"><path d="M0 10L8 1l8 8-8 18-7-7z" fill="#e8442c"/><path d="M9 0l6 3-9 12-6-4z" fill="#e8318a"/><path d="M15 1l8 3 5 6-2 14-8 4-6-4z" fill="#1a78d8"/><path d="M1 20l4-1 4 8z" fill="#f08a20"/><rect x="5" y="5" width="17" height="18" fill="#151015"/><path d="M8 8h3M9.500 8v6M8 14h3M14 8h4v4q0 2-3 2M8 20h6" fill="none" stroke="#fff" stroke-width="1.300"/></svg></button>
            <button class="run" aria-label="文件资源管理器"><svg width="28" height="28" viewBox="0 0 28 28"><path d="M0 1h10l3 3h14v10H0z" fill="#c48a14"/><rect x="0" y="5" width="28" height="22" rx="1" fill="#f0c040"/><path d="M5 28v-8q0-2 2-2h14q2 0 2 2v8h-4v-4H9v4z" fill="#1568b0"/></svg></button>
            <button class="run cur" aria-label="PowerPoint"><svg width="28" height="28" viewBox="0 0 28 28"><circle cx="15" cy="14" r="13" fill="#d35230"/><path d="M15 1a13 13 0 0 1 13 13H15z" fill="#ed8b6a"/><rect x="0" y="6" width="15" height="16" rx="1" fill="#b7391c"/><path d="M5 19V9h4a3 3 0 0 1 0 6H5" fill="none" stroke="#fff" stroke-width="2"/></svg></button>
            <button class="run" aria-label="音乐"><svg width="24" height="24" viewBox="0 0 24 24"><rect width="24" height="24" rx="4" fill="#e8eef6"/><circle cx="12" cy="12" r="10" fill="#1461de"/><path d="M6 12h8V6h3v6q0 6-5 6-6 0-6-6z" fill="#fff"/></svg></button>
            <button class="run" aria-label="Chrome"><svg width="28" height="28" viewBox="0 0 28 28"><path d="M14 14L1.900 7a14 14 0 0 1 24.200 0z" fill="#da3b2c"/><path d="M14 14l12.100-7A14 14 0 0 1 14 28z" fill="#f6c33a"/><path d="M14 14v14A14 14 0 0 1 1.900 7z" fill="#2b9348"/><circle cx="14" cy="14" r="6.500" fill="#fff"/><circle cx="14" cy="14" r="5" fill="#2f74e0"/></svg></button>
        </div>
        <div class="tray">
            <svg width="14" height="8" viewBox="0 0 14 8"><path d="M1 7l6-6 6 6" fill="none" stroke="#333" stroke-width="1.500"/></svg>
            <svg width="20" height="18" viewBox="0 0 20 18"><path d="M4 14a5 5 0 0 1-1-8q6-8 13-1 3 2 2 6z" fill="#555"/><circle cx="14" cy="12" r="5.500" fill="#d93030"/><path d="M12 10l4 4M16 10l-4 4" stroke="#fff" stroke-width="1.300"/></svg>
            <svg width="14" height="20" viewBox="0 0 14 20"><rect x="4" y="1" width="6" height="12" rx="3" fill="none" stroke="#2a4fa0" stroke-width="1.600"/><path d="M1 9v1q0 5 6 5t6-5V9M7 15v5" fill="none" stroke="#2a4fa0" stroke-width="1.600"/></svg>
            <span class="ime">英</span>
            <svg width="20" height="15" viewBox="0 0 20 15"><path d="M1 5q9-8 18 0M4 8q6-5 12 0M7 11q3-3 6 0" fill="none" stroke="#333" stroke-width="1.500"/><circle cx="10" cy="13" r="1.500" fill="#333"/></svg>
            <svg width="20" height="17" viewBox="0 0 20 17"><path d="M1 6h3l5-5v15l-5-5H1zM11 6q2 2.500 0 5M14 4q4 4.500 0 9M16 1q6 7.500 0 15" fill="none" stroke="#333" stroke-width="1.300"/></svg>
            <svg width="19" height="13" viewBox="0 0 19 13"><rect x="1" y="1" width="14" height="11" rx="2" fill="none" stroke="#333" stroke-width="1.500"/><rect x="3" y="3" width="8" height="7" fill="#333"/><path d="M16 4h2v5h-2z" fill="#333"/></svg>
            <div class="clock"><span>20:25</span><span>2022/6/9</span></div>
        </div>
    </div>
</div>

<span class="mark paused">暂停</span>
<span class="mark course">更多课程:www.vipc9.com</span>
<span class="mark contact">一手v：qianren03</span>
</body>
</html>
```

FILE: styles.css
```css
* {
    margin: 0;
    padding: 0;
    box-sizing: border-box;
}
body {
    position: relative;
    min-height: 100vh;
    padding: 0 5%;
    background: #191919;
    color: #2e2e2e;
    font: 14px/18px "Open Sans", "Noto Sans CJK SC", sans-serif;
    overflow: hidden;
}
button, input, select {
    border: 0;
    background: none;
    color: inherit;
    font: inherit;
}
button {
    display: flex;
    align-items: center;
    justify-content: center;
    white-space: nowrap;
}
svg {
    display: block;
    flex: none;
}
a {
    color: inherit;
    text-decoration: none;
}
ol, ul {
    list-style: none;
}
.defs {
    position: absolute;
}
.window {
    display: flex;
    flex-direction: column;
    height: 100vh;
    background: #d6d6d6;
}

/* 标题栏 */
.titlebar {
    display: flex;
    align-items: center;
    flex: none;
    height: 54px;
    background: #d1d1d1;
}
.title-left {
    display: flex;
    align-items: center;
    width: 37%;
    padding-left: 17px;
}
.autosave {
    display: flex;
    align-items: center;
    gap: 7px;
    margin-left: 18px;
}
.switch-input {
    position: absolute;
    opacity: 0;
}
.switch {
    display: flex;
    align-items: center;
    justify-content: space-between;
    width: 49px;
    height: 22px;
    padding: 0 7px 0 3px;
    border: 1px solid #666;
    border-radius: 11px;
    background: #e4e4e4;
}
.switch i {
    width: 16px;
    height: 16px;
    border-radius: 50%;
    background: #444;
}
.save {
    margin-left: 10px;
}
.doc-name {
    gap: 7px;
    margin-left: 34px;
}
.search {
    display: flex;
    align-items: center;
    gap: 14px;
    width: 27%;
    height: 37px;
    padding-left: 24px;
    border: 1px solid #b4b4b4;
    border-bottom-color: #999;
    border-radius: 3px;
    background: #dedede;
}
.search input {
    flex: 1;
    font-size: 16px;
    outline: none;
}
.search input::placeholder {
    color: #333;
}
.title-right {
    display: flex;
    align-items: center;
    justify-content: flex-end;
    flex: 1;
    gap: 12px;
}
.user {
    font-weight: 600;
}
.avatar {
    width: 28px;
    height: 28px;
    border-radius: 50%;
    background: #0560b4;
    color: #b8d8f4;
    font-size: 11px;
    line-height: 28px;
    text-align: center;
}
.win-btns {
    display: flex;
}
.win-btns button {
    width: 55px;
    height: 40px;
}

/* 选项卡 */
.tabs {
    display: flex;
    align-items: center;
    flex: none;
    gap: 20px;
    height: 36px;
    padding: 0 13px 0 20px;
    background: #d1d1d1;
    font-size: 16px;
}
.tabs a {
    padding-top: 3px;
    line-height: 25px;
    border-bottom: 3px solid transparent;
}
.tabs .file {
    margin-right: 2px;
}
.tabs .on {
    border-color: #b5391a;
    font-weight: bold;
}
.tabs .format {
    color: #a83a1e;
    font-weight: 500;
}
.tab-btns {
    display: flex;
    gap: 10px;
    margin-left: auto;
}
.tab-btns button {
    height: 28px;
    gap: 5px;
    border-radius: 4px;
    background: #ececec;
    box-shadow: 0 0 1px #777;
    font-size: 15px;
    font-weight: bold;
}
.tab-btns .rec, .tab-btns .share {
    width: 70px;
}
.tab-btns .comment {
    width: 36px;
}
.tab-btns .share {
    background: #b83c16;
    color: #f8e6df;
}

/* 功能区 */
.ribbon {
    position: relative;
    z-index: 2;
    display: flex;
    flex: none;
    height: 116px;
    margin: 0 8px;
    padding: 2px 0 1px;
    border-radius: 8px;
    background: #e8e8e8;
    box-shadow: 0 1px 3px #8a8a8a;
}
.group {
    display: flex;
    flex-direction: column;
    flex: none;
    border-right: 1px solid #c6c6c6;
}
.body {
    display: flex;
    flex: 1;
}
.foot {
    display: flex;
    align-items: center;
    height: 22px;
}
.foot span {
    flex: 1;
    text-align: center;
}
.launch {
    margin: 0 4px 0 6px;
}
.chev {
    margin-left: 6px;
}
.far {
    margin-left: 8px;
}
.wide {
    margin-left: 14px;
}
.pale {
    opacity: .4;
}
.up {
    transform: rotate(180deg);
}
.big {
    flex-direction: column;
    justify-content: flex-start;
    padding-top: 7px;
}
.big > svg:first-child {
    margin-bottom: 4px;
}
.big > svg:last-child {
    margin-top: 5px;
}
.line {
    display: flex;
    align-items: center;
    gap: 4px;
}
.col, .col3, .rows {
    display: flex;
    flex-direction: column;
}
.col {
    gap: 10px;
    align-items: flex-start;
    padding-top: 7px;
}
.col3 {
    padding-top: 1px;
}
.col3 button {
    justify-content: flex-start;
    height: 30px;
}
.txt button > svg:first-child {
    margin-right: 4px;
}
.txt .chev {
    margin-left: 5px;
}
.txt .wide {
    margin-left: 14px;
}
.rows {
    gap: 8px;
    padding-top: 11px;
}
.row {
    display: flex;
    align-items: center;
    height: 29px;
}
.slot {
    width: 30px;
    height: 28px;
}
.g-undo {
    width: 71px;
}
.g-undo .body {
    padding-left: 19px;
}
.g-clip {
    width: 115px;
}
.g-clip .body {
    gap: 10px;
    padding-left: 18px;
}
.g-slides {
    width: 160px;
}
.g-slides .body {
    gap: 11px;
    padding-left: 10px;
}
.g-font {
    width: 362px;
}
.g-font .rows {
    padding-left: 8px;
}
.combo {
    position: relative;
    margin-right: 2px;
    border: 1px solid #c8c8c8;
    border-radius: 3px;
}
.combo select {
    width: 100%;
    height: 26px;
    padding-left: 1px;
    appearance: none;
    font-size: 15px;
}
.combo svg {
    position: absolute;
    right: 3px;
    top: 10px;
    pointer-events: none;
}
.family {
    width: 192px;
}
.size {
    width: 55px;
}
.grow {
    align-items: flex-start;
    width: 32px;
    font-size: 20px;
    line-height: 26px;
}
.grow svg {
    margin-top: 4px;
}
.less {
    width: 28px;
    font-size: 17px;
}
.clear {
    margin-left: 2px;
    border-left: 1px solid #ccc;
}
.g-font .row:last-child {
    font-size: 16px;
}
.slot em {
    font-family: "Liberation Serif", serif;
    font-size: 18px;
}
.shadow {
    font-weight: bold;
    text-shadow: 1px 1px 1px #999;
}
.slot s {
    font-size: 14px;
}
.drop {
    margin-right: 10px;
}
.g-font .drop {
    margin-right: 16px;
}
.av {
    margin-left: 5px;
}
.av span {
    line-height: 16px;
    font-size: 14px;
}
.g-para {
    width: 267px;
}
.g-para .body {
    gap: 14px;
    padding-left: 12px;
}
.g-para .drop:last-child {
    margin-right: 0;
}
.spacing {
    margin-left: 5px;
}
.aligns {
    margin-left: -6px;
}
.aligns .drop {
    margin-left: 10px;
}
.aligns .on {
    border: 1px solid #777;
    border-radius: 4px;
    background: #cfcfcf;
}
.g-draw {
    width: 404px;
}
.g-draw .body {
    gap: 11px;
    padding-left: 9px;
}
.g-draw .txt {
    margin-left: -2px;
}
.shapes {
    display: flex;
    align-self: flex-start;
    height: 73px;
    margin-top: 11px;
    border: 1px solid #c2c2c2;
    border-radius: 4px;
}
.shape-scroll {
    display: flex;
    flex-direction: column;
    width: 18px;
    border-left: 1px solid #c2c2c2;
}
.shape-scroll button {
    flex: 1;
}
.shape-scroll button + button {
    border-top: 1px solid #b8b8b8;
}
.g-edit {
    width: 102px;
}
.g-edit .body {
    padding-left: 14px;
}
.g-voice {
    width: 68px;
}
.g-idea {
    width: 65px;
}
.g-voice .body, .g-idea .body {
    justify-content: center;
}
.g-voice .big, .g-idea .big {
    padding-top: 5px;
}
.collapse {
    align-self: flex-end;
    margin: 0 12px 9px auto;
}

/* 缩略图 */
.work {
    display: flex;
    flex: 1;
    min-height: 0;
}
.thumbs {
    display: flex;
    width: 297px;
    overflow: hidden;
    border-right: 1px solid #bcbcbc;
}
.thumbs ol {
    display: flex;
    flex-direction: column;
    justify-content: flex-end;
    flex: 1;
    gap: 25px;
    padding: 0 0 19px 5px;
}
.thumbs li {
    display: flex;
    align-items: flex-start;
    gap: 18px;
}
.thumbs li span {
    width: 20px;
    font-size: 18px;
    line-height: 8px;
    color: #555;
}
.thumbs li > svg {
    width: 208px;
    border-radius: 4px;
    background: #ebebeb;
    box-shadow: 0 0 2px #777;
}
.thumbs .cur span {
    color: #b5492a;
}
.thumbs .cur > svg {
    outline: 3px solid #a9492b;
    outline-offset: 1px;
}
.scroll {
    display: flex;
    flex-direction: column;
    align-items: center;
    width: 28px;
    padding: 6px 0;
}
.thumbs .scroll {
    width: 26px;
}
.thumbs .bar {
    width: 10px;
    height: 51px;
    margin: 137px 0 auto;
    border-radius: 5px;
    background: #5a5a5a;
}

/* 幻灯片 */
.editor {
    display: flex;
    flex-direction: column;
    flex: 1;
}
.stage {
    display: flex;
    flex: 1;
    min-height: 0;
}
.slide {
    position: relative;
    width: 92%;
    max-width: 1296px;
    aspect-ratio: 16 / 9;
    margin: 10px auto 0;
    align-self: flex-start;
    background: #eaeaea;
    box-shadow: 0 0 2px #999;
    font-family: "Liberation Sans", "Noto Sans CJK SC", sans-serif;
}
.slide > * {
    position: absolute;
}
.xmark {
    left: 33px;
    top: 35px;
}
.slide h1 {
    left: 97px;
    top: 28px;
    color: #1c1c1c;
    font-size: 44px;
    font-weight: normal;
    line-height: 60px;
}
.slide h2 {
    left: 114px;
    top: 95px;
    color: #444;
    font-size: 19px;
    line-height: 28px;
}
.arrows {
    left: 0;
    top: 0;
    width: 100%;
}
.node {
    height: 32px;
    color: #e6e6e6;
    font-size: 22px;
    line-height: 32px;
    text-align: center;
}
.node u {
    text-decoration: underline;
    text-decoration-style: dotted;
    text-decoration-color: #d88a80;
    text-decoration-thickness: 2px;
    text-decoration-skip-ink: none;
    text-underline-offset: 3px;
}
.gold {
    background: #7e5c00;
}
.blue {
    background: #4ba3da;
}
.n-cart {
    left: 81px;
    top: 258px;
    width: 127px;
}
.n-item {
    left: 279px;
    top: 259px;
    width: 155px;
}
.area {
    border-radius: 38px;
    background: #2c7d12;
}
.inner {
    left: 256px;
    top: 361px;
    width: 213px;
    height: 211px;
}
.depend {
    left: 540px;
    top: 175px;
    width: 204px;
    height: 383px;
}
.cap {
    color: #555;
    font-size: 16px;
    line-height: 24px;
}
.cap-inner {
    left: 300px;
    top: 579px;
}
.cap-depend {
    left: 585px;
    top: 153px;
}
.n-detail {
    left: 273px;
    top: 410px;
    width: 167px;
    height: 33px;
    background: #8a5200;
}
.n-detail u {
    display: block;
    height: 29px;
    margin: 2px 10px;
    border: 2px solid #c8a552;
    background: #7d653c;
    color: #a09a8c;
    line-height: 26px;
}
.n-status {
    left: 280px;
    top: 503px;
    width: 165px;
    background: #8a6200;
}
.handles {
    left: 266px;
    top: 354px;
}
.depend-list {
    display: flex;
    flex-direction: column;
    gap: 32px;
    left: 558px;
    top: 225px;
    width: 165px;
}
.entity {
    left: 902px;
    top: 209px;
    width: 288px;
    height: 297px;
    border: 1px solid #a9bccd;
    background: #dadada;
    box-shadow: 0 2px 4px #b4c2cc;
    color: #3d719e;
    font: 14px/22px "Open Sans", sans-serif;
}
.entity h3 {
    height: 58px;
    padding-left: 6px;
    background: #427eb6;
    color: #e4edf5;
    font-size: 16px;
    font-weight: normal;
    line-height: 58px;
}
.entity p {
    margin: 0 4px;
    padding: 5px 0 1px 14px;
    border-bottom: 2px dotted #5b8db5;
}
.entity ul {
    padding: 3px 0 0 18px;
}
.brand {
    display: flex;
    right: 38px;
    top: 665px;
    gap: 7px;
    color: #333;
}
.brand strong, .brand small {
    display: block;
    line-height: 28px;
}
.brand strong {
    font-size: 25px;
}
.brand small {
    font-size: 9px;
    line-height: 16px;
}
.main-scroll {
    width: 20px;
}
.main-scroll .bar {
    width: 9px;
    height: 22px;
    margin: 150px 0 auto;
    border-radius: 5px;
    background: #666;
}
.pager {
    display: flex;
    flex-direction: column;
    gap: 6px;
    padding-bottom: 18px;
}
.notes {
    height: 44px;
    padding-left: 11px;
    border-top: 1px solid #c9c9c9;
    color: #505050;
    font-size: 17px;
    line-height: 36px;
}

/* 状态栏 */
.status {
    display: flex;
    align-items: center;
    flex: none;
    height: 26px;
    padding-left: 8px;
    border-bottom: 1px solid #b5b5b5;
    background: #e2e2e2;
}
.lang {
    margin-left: 38px;
}
.a11y {
    gap: 4px;
    margin-left: 18px;
}
.status-right {
    display: flex;
    align-items: center;
    align-self: stretch;
    margin-left: auto;
}
.note-btn, .disp-btn {
    gap: 3px;
    margin-right: 16px;
}
.views {
    display: flex;
    align-self: stretch;
    margin: 0 4px;
}
.views button {
    width: 46px;
}
.views .on {
    background: #c8c8c8;
}
.zoom-btn {
    width: 16px;
    font-size: 18px;
}
input[type=range] {
    width: 115px;
    height: 16px;
    margin: 0 3px;
    appearance: none;
    background: linear-gradient(#555, #555) 50% 50% / 1px 7px no-repeat, linear-gradient(#555, #555) 0 50% / 100% 1px no-repeat;
}
input[type=range]::-webkit-slider-thumb {
    width: 6px;
    height: 14px;
    appearance: none;
    background: #555;
}
.pct {
    margin-left: 11px;
}
.fit {
    margin: 0 5px 0 14px;
}

/* 任务栏 */
.taskbar {
    display: grid;
    grid-template-columns: 1fr auto 1fr;
    align-items: center;
    flex: none;
    height: 55px;
    background: linear-gradient(90deg, #d4d6d4 0, #d4d8d6 20%, #c4d2dc 25%, #bfc4d8 31%, #bac6d2 40%, #bcc5d6 54%, #b9cec0 58%, #b7d3ae 61%, #aad2ce 66%, #bcc8d8 69%, #cdc4d4 72%, #bcc6d6 75%, #bccdd6 80%, #ccd6d8 85%, #d3d8d5 90%);
}
.weather {
    display: flex;
    align-items: center;
    gap: 8px;
    padding-left: 32px;
}
.weather span, .clock span {
    display: block;
}
.apps {
    display: flex;
    gap: 7px;
}
.apps button {
    position: relative;
    width: 44px;
    height: 44px;
    border-radius: 4px;
}
.run:after {
    content: "";
    position: absolute;
    left: 50%;
    bottom: -1px;
    width: 6px;
    height: 4px;
    margin-left: -3px;
    border-radius: 2px;
    background: #68747e;
}
.apps .cur {
    background: #d4dde4;
}
.apps .cur:after {
    width: 18px;
    margin-left: -9px;
    background: #0f68b4;
}
.tray {
    display: flex;
    align-items: center;
    justify-content: flex-end;
    gap: 9px;
    padding-right: 22px;
}
.tray svg:nth-child(2) {
    margin: 0 6px 0 3px;
}
.ime {
    margin: 0 11px;
    font-size: 18px;
}
.clock {
    margin-left: 7px;
    text-align: right;
}

/* 水印 */
.mark {
    position: absolute;
    z-index: 5;
    color: rgba(226, 86, 68, .8);
    font-size: 20px;
    line-height: 26px;
    white-space: nowrap;
}
.paused {
    left: 11px;
    top: 10px;
    color: #2f62f6;
    font-size: 19px;
}
.course {
    left: 236px;
    top: 891px;
}
.contact {
    right: 72px;
    top: 860px;
    font-size: 19px;
}
```
